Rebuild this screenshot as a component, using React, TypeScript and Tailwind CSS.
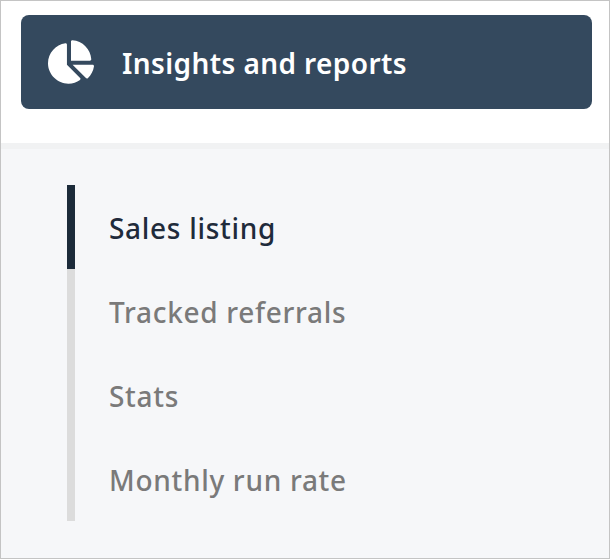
export default function App() {
  const items = ["Sales listing", "Tracked referrals", "Stats", "Monthly run rate"];
  return (
    <div className="h-[559px] w-[610px] border border-[#c4c4c4] bg-white flex flex-col font-['Noto_Sans',sans-serif]">
      <div className="h-[142px] pl-5 pr-[17px] pt-[14px] shrink-0">
        <div className="h-[94px] rounded-lg bg-[#34495e] flex items-center pl-[27px] gap-[28px]">
          <svg width="46" height="46" viewBox="0 0 544 512" fill="white">
            <path d="M527.79 288H290.5l158.03 158.03c6.04 6.04 15.98 6.53 22.19.68 38.7-36.46 65.32-85.61 73.13-140.86 1.34-9.46-6.51-17.85-16.06-17.85zm-15.83-64.8C503.72 103.74 408.26 8.28 288.8.04 279.68-.59 272 7.1 272 16.24V240h223.77c9.14 0 16.82-7.68 16.19-16.8zM224 288V50.71c0-9.55-8.39-17.4-17.84-16.06C86.99 51.49-4.1 155.6.14 280.37 4.5 408.51 114.83 513.59 243.03 511.98c50.4-.63 96.97-16.87 135.26-44.03 7.9-5.6 8.42-17.23 1.57-24.08L224 288z" />
          </svg>
          <span className="text-white text-[28px] font-semibold tracking-[0.4px] pt-[2px]">Insights and reports</span>
        </div>
      </div>
      <div className="flex-1 bg-[#f6f7f9] pl-[66px] pt-[42px] shadow-[inset_0_6px_0_#f1f2f3]">
        <div className="flex flex-col">
          {items.map((t, i) => (
            <div key={t} className={`h-[84px] flex items-center pl-[34px] pt-[2px] border-l-[8px] text-[28px] font-medium tracking-[0.7px] ${i === 0 ? "border-[#1c2b3a] text-[#1f2b3b]" : "border-[#dcdcdc] text-[#7a7a7a]"}`}>
              {t}
            </div>
          ))}
        </div>
      </div>
    </div>
  );
}
